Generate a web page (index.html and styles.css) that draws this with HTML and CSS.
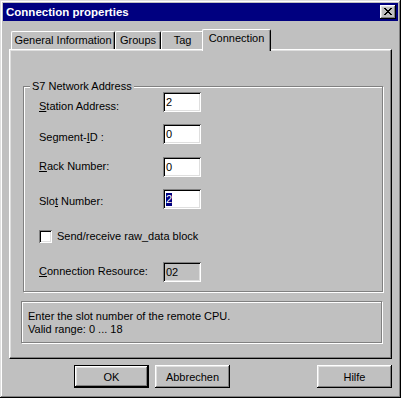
FILE: index.html
```html
<!DOCTYPE html>
<html lang="en">
<head>
<meta charset="UTF-8" />
<title>Connection properties</title>
<link rel="stylesheet" href="styles.css">
</head>
<body>

<div class="window">
  <!-- Titelleiste -->
  <div class="titlebar">
    <span class="title">Connection properties</span>
    <button class="close">
      <svg width="8" height="7" viewBox="0 0 8 7"><path d="M0 0h2v1H0zM6 0h2v1H6zM1 1h2v1H1zM5 1h2v1H5zM2 2h4v1H2zM3 3h2v1H3zM2 4h4v1H2zM1 5h2v1H1zM5 5h2v1H5zM0 6h2v1H0zM6 6h2v1H6z" fill="#000"/></svg>
    </button>
  </div>

  <!-- Reiter -->
  <div class="tabs">
    <div class="tab tab-general">General Information</div>
    <div class="tab tab-groups">Groups</div>
    <div class="tab tab-tag">Tag</div>
    <div class="tab tab-connection active">Connection</div>
  </div>

  <div class="panel">
    <fieldset class="group">
      <legend>S7 Network Address</legend>
      <div class="fields">
        <div class="field f-station">
          <label><u>S</u>tation Address:</label>
          <div class="edit">2</div>
        </div>
        <div class="field f-segment">
          <label>Segment-<u>I</u>D :</label>
          <div class="edit">0</div>
        </div>
        <div class="field f-rack">
          <label><u>R</u>ack Number:</label>
          <div class="edit">0</div>
        </div>
        <div class="field f-slot">
          <label>Slo<u>t</u> Number:</label>
          <div class="edit"><span class="selected">2</span></div>
        </div>
        <div class="field f-check">
          <span class="checkbox"></span>
          <label>Send/receive raw_data block</label>
        </div>
        <div class="field f-resource">
          <label><u>C</u>onnection Resource:</label>
          <div class="edit disabled">02</div>
        </div>
      </div>
    </fieldset>

    <div class="hint">Enter the slot number of the remote CPU.<br>Valid range: 0 ... 18</div>
  </div>

  <div class="buttons">
    <button class="btn default">OK</button>
    <button class="btn">Abbrechen</button>
    <button class="btn help">Hilfe</button>
  </div>
</div>

</body>
</html>
```

FILE: styles.css
```css
/* Grundlayout */
body {
  margin: 0;
  background: #c0c0c0;
  color: #000;
  font-family: "Liberation Sans", Arial, sans-serif;
  font-size: 11px;
}
.window {
  width: 401px;
  height: 398px;
  box-sizing: border-box;
  padding: 3px;
  background: #c0c0c0;
  box-shadow: inset -1px -1px #000, inset 1px 1px #dfdfdf, inset -2px -2px #808080, inset 2px 2px #fff;
}
/* Titelleiste */
.titlebar {
  height: 18px;
  display: flex;
  align-items: center;
  padding: 0 2px 0 3px;
  background: #000080;
  color: #fff;
}
.title {
  font-weight: bold;
  font-size: 11.5px;
}
.close {
  margin-left: auto;
  width: 16px;
  height: 14px;
  padding: 0;
  border: none;
  background: #c0c0c0;
  display: flex;
  align-items: center;
  justify-content: center;
  box-shadow: inset -1px -1px #000, inset 1px 1px #fff, inset -2px -2px #808080, inset 2px 2px #dfdfdf;
}
.close svg {
  display: block;
  margin: 0 1px 1px 0;
}
/* Reiter */
.tabs {
  display: flex;
  align-items: flex-end;
  height: 20px;
  margin: 8px 0 0 8px;
}
.tab {
  box-sizing: border-box;
  height: 18px;
  padding-top: 2px;
  line-height: 13px;
  text-align: center;
  background: #c0c0c0;
  border-top: 1px solid #fff;
  border-left: 1px solid #fff;
  border-right: 1px solid #000;
  border-radius: 2px 2px 0 0;
  box-shadow: inset -1px 0 #808080;
}
.tab-general { width: 104px; }
.tab-groups { width: 46px; }
.tab-tag { width: 43px; }
.tab-connection { width: 69px; }
.tab.active {
  height: 22px;
  margin-left: -2px;
  margin-bottom: -2px;
  position: relative;
  z-index: 1;
}
/* Reiterseite */
.panel {
  height: 310px;
  box-sizing: border-box;
  margin: 0 6px;
  border: 1px solid;
  border-color: #fff #000 #000 #fff;
  box-shadow: inset -1px -1px #808080, inset 1px 1px #dfdfdf;
  overflow: hidden;
}
.group {
  width: 360px;
  box-sizing: border-box;
  margin: 30px 0 0 13px;
  padding: 0 0 9px 0;
  min-inline-size: 0;
  border: 1px solid #808080;
  box-shadow: inset 1px 1px #fff, 1px 1px #fff;
}
.group legend {
  margin-left: 6px;
  padding: 0 2px;
  line-height: 12px;
  background: #c0c0c0;
}
.fields {
  display: grid;
  grid-template-rows: 32px 33px 32px 37px 36px 20px;
  padding-left: 15px;
}
.field {
  display: flex;
  align-items: flex-start;
}
.field label {
  width: 124px;
  flex: none;
  line-height: 13px;
}
.f-station label { padding-top: 8px; }
.f-segment label { padding-top: 7px; }
.f-rack label { padding-top: 3px; }
.f-slot label { padding-top: 6px; }
.f-resource label { padding-top: 3px; }
.f-check label {
  width: auto;
  margin-top: 4px;
}
.edit {
  width: 38px;
  height: 20px;
  box-sizing: border-box;
  padding-left: 3px;
  display: flex;
  align-items: center;
  line-height: 13px;
  background: #fff;
  box-shadow: inset 1px 1px #808080, inset -1px -1px #fff, inset 2px 2px #000, inset -2px -2px #dfdfdf;
}
.edit.disabled {
  background: #c0c0c0;
}
.selected {
  display: inline-block;
  background: #000080;
  color: #fff;
}
.checkbox {
  width: 13px;
  height: 13px;
  flex: none;
  margin: 4px 5px 0 0;
  background: #fff;
  box-shadow: inset 1px 1px #808080, inset -1px -1px #fff, inset 2px 2px #000, inset -2px -2px #dfdfdf;
}
/* Hinweistext */
.hint {
  width: 361px;
  height: 42px;
  box-sizing: border-box;
  margin: 9px 0 0 11px;
  padding: 8px 6px 0;
  line-height: 13px;
  border: 1px solid #808080;
  box-shadow: inset 1px 1px #fff, 1px 1px #fff;
}
/* Schaltflächen */
.buttons {
  display: flex;
  margin-top: 6px;
  padding: 0 6px 0 71px;
}
.btn {
  width: 75px;
  height: 23px;
  margin-right: 6px;
  padding: 0;
  border: none;
  background: #c0c0c0;
  color: #000;
  font-family: inherit;
  font-size: 11px;
  box-shadow: inset -1px -1px #000, inset 1px 1px #fff, inset -2px -2px #808080, inset 2px 2px #dfdfdf;
}
.btn.default {
  box-shadow: inset 0 0 0 1px #000, inset -2px -2px #000, inset 2px 2px #fff, inset -3px -3px #808080, inset 3px 3px #dfdfdf;
}
.btn.help {
  margin-left: auto;
  margin-right: 0;
}
```
